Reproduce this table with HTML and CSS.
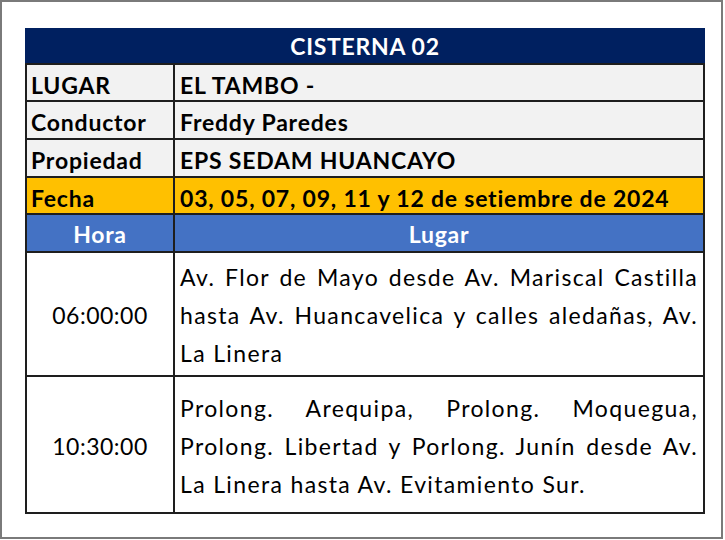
FILE: index.html
```html
<!DOCTYPE html>
<html lang="es">
<head>
<meta charset="utf-8">
<title>CISTERNA 02</title>
<link rel="stylesheet" href="styles.css">
</head>
<body>
<div class="frame">
  <div class="sheet">
    <div class="title">CISTERNA 02</div>
    <div class="grid">
      <div class="cell label gray">LUGAR</div>
      <div class="cell value gray">EL TAMBO -</div>
      <div class="cell label gray">Conductor</div>
      <div class="cell value gray">Freddy Paredes</div>
      <div class="cell label gray">Propiedad</div>
      <div class="cell value gray">EPS SEDAM HUANCAYO</div>
      <div class="cell label gold">Fecha</div>
      <div class="cell value gold">03, 05, 07, 09, 11 y 12 de setiembre de 2024</div>
      <div class="cell head">Hora</div>
      <div class="cell head">Lugar</div>
      <div class="cell time">06:00:00</div>
      <div class="cell place">
        <span class="jl">Av. Flor de Mayo desde Av. Mariscal Castilla</span>
        <span class="jl">hasta Av. Huancavelica y calles aledañas, Av.</span>
        <span class="ll">La Linera</span>
      </div>
      <div class="cell time">10:30:00</div>
      <div class="cell place">
        <span class="jl">Prolong. Arequipa, Prolong. Moquegua,</span>
        <span class="jl">Prolong. Libertad y Porlong. Junín desde Av.</span>
        <span class="ll">La Linera hasta Av. Evitamiento Sur.</span>
      </div>
    </div>
  </div>
</div>
</body>
</html>
```

FILE: styles.css
```css
html, body {
  margin: 0;
  padding: 0;
  background: #ffffff;
}

body {
  font-family: Lato, "Liberation Sans", sans-serif;
  color: #000;
}

.frame {
  box-sizing: border-box;
  width: 723px;
  height: 539px;
  border: 2px solid #7a7a7a;
  padding: 26px 0 0 23px;
}

.sheet {
  width: 680px;
}

.title {
  height: 35px;
  background: #002060;
  color: #fff;
  font-weight: 700;
  font-size: 23px;
  letter-spacing: 0.7px;
  line-height: 37px;
  text-align: center;
}

.grid {
  display: grid;
  grid-template-columns: 146px 528px;
  grid-template-rows: 35px 36px 36px 35px 36px 122px 135px;
  gap: 2px;
  border: 2px solid #1e1e1e;
  background: #1e1e1e;
}

.cell {
  display: flex;
  align-items: center;
  background: #fff;
  white-space: nowrap;
}

.label {
  font-weight: 700;
  font-size: 23px;
  letter-spacing: 0.8px;
  padding: 4px 0 0 4px;
}

.value {
  font-weight: 700;
  font-size: 23px;
  letter-spacing: 0.8px;
  padding: 4px 0 0 5px;
}

.gray {
  background: #f2f2f2;
}

.gold {
  background: #ffc000;
}

.head {
  background: #4472c4;
  color: #fff;
  font-weight: 700;
  font-size: 23px;
  letter-spacing: 0.7px;
  justify-content: center;
  padding-top: 2px;
}

.time {
  justify-content: center;
  font-size: 23px;
  letter-spacing: 0.5px;
  padding-top: 2px;
}

.place {
  flex-direction: column;
  align-items: stretch;
  justify-content: center;
  font-size: 23px;
  line-height: 38px;
  letter-spacing: 1.35px;
  padding: 2px 5px 0 5px;
}

.jl {
  display: block;
  text-align: justify;
  text-align-last: justify;
}

.ll {
  display: block;
  text-align: left;
}
```
